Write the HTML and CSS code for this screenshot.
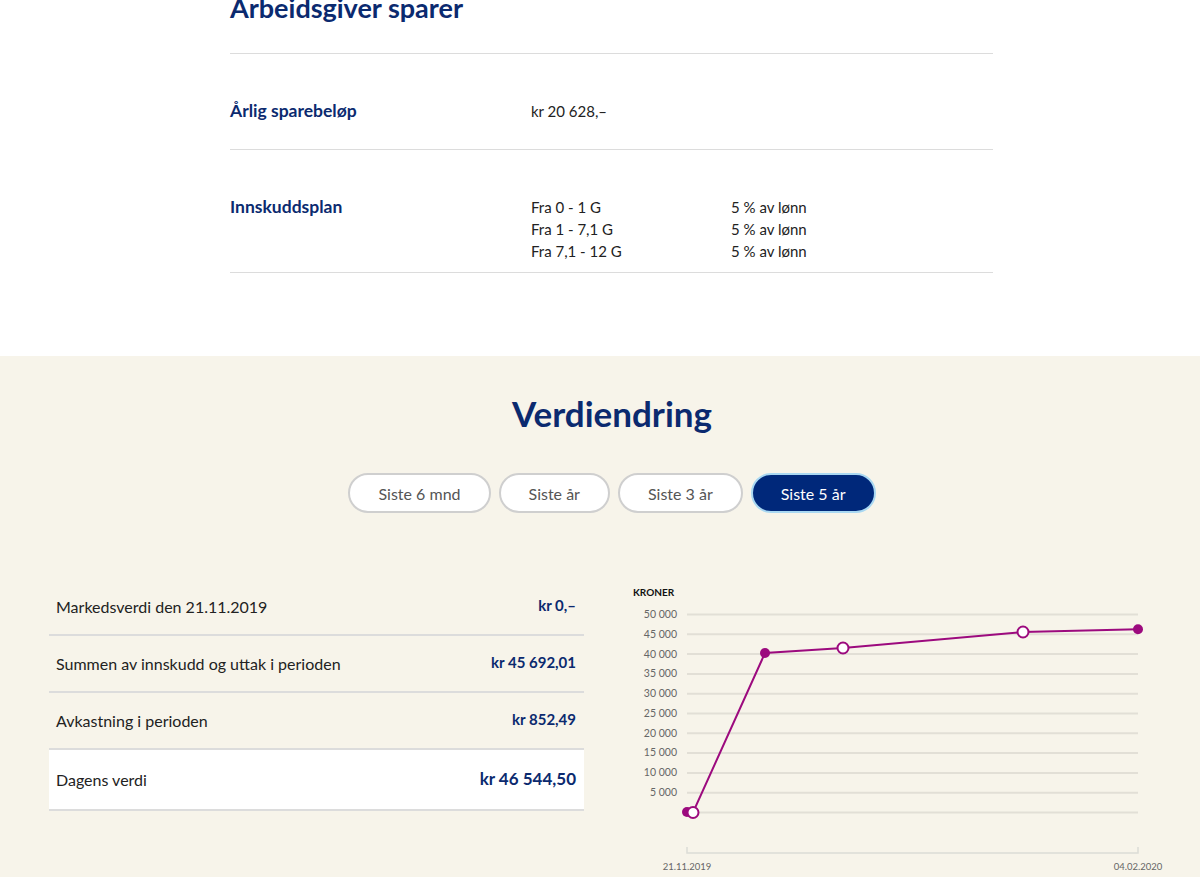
FILE: index.html
```html
<!DOCTYPE html>
<html lang="no">
<head>
    <meta charset="UTF-8">
    <meta name="viewport" content="width=device-width, initial-scale=1.0">
    <title>Arbeidsgiver sparer</title>
    <link rel="stylesheet" href="styles.css">
</head>
<body>

    <section class="savings">
        <h2>Arbeidsgiver sparer</h2>
        <div class="info-row first">
            <div class="info-label">Årlig sparebeløp</div>
            <div class="info-value">kr 20 628,–</div>
        </div>
        <div class="info-row second">
            <div class="info-label">Innskuddsplan</div>
            <div class="info-value">
                <div>Fra 0 - 1 G</div>
                <div>Fra 1 - 7,1 G</div>
                <div>Fra 7,1 - 12 G</div>
            </div>
            <div class="info-value">
                <div>5 % av lønn</div>
                <div>5 % av lønn</div>
                <div>5 % av lønn</div>
            </div>
        </div>
    </section>

    <section class="change">
        <h1>Verdiendring</h1>
        <div class="periods">
            <button class="period">Siste 6 mnd</button>
            <button class="period">Siste år</button>
            <button class="period">Siste 3 år</button>
            <button class="period active">Siste 5 år</button>
        </div>

        <div class="change-body">
            <div class="summary">
                <div class="summary-row">
                    <span>Markedsverdi den 21.11.2019</span>
                    <strong>kr 0,–</strong>
                </div>
                <div class="summary-row">
                    <span>Summen av innskudd og uttak i perioden</span>
                    <strong>kr 45 692,01</strong>
                </div>
                <div class="summary-row">
                    <span>Avkastning i perioden</span>
                    <strong>kr 852,49</strong>
                </div>
                <div class="summary-row total">
                    <span>Dagens verdi</span>
                    <strong>kr 46 544,50</strong>
                </div>
            </div>

            <svg class="chart" width="560" height="300" viewBox="0 0 560 300">
                <text class="unit" x="13" y="19">KRONER</text>
                <g class="grid">
                    <line x1="67" y1="37.5" x2="518" y2="37.5"/>
                    <line x1="67" y1="57.3" x2="518" y2="57.3"/>
                    <line x1="67" y1="77.1" x2="518" y2="77.1"/>
                    <line x1="67" y1="96.9" x2="518" y2="96.9"/>
                    <line x1="67" y1="116.7" x2="518" y2="116.7"/>
                    <line x1="67" y1="136.5" x2="518" y2="136.5"/>
                    <line x1="67" y1="156.3" x2="518" y2="156.3"/>
                    <line x1="67" y1="176.1" x2="518" y2="176.1"/>
                    <line x1="67" y1="195.9" x2="518" y2="195.9"/>
                    <line x1="67" y1="215.7" x2="518" y2="215.7"/>
                    <line x1="67" y1="235.5" x2="518" y2="235.5"/>
                </g>
                <g class="ylabels">
                    <text x="57" y="41">50 000</text>
                    <text x="57" y="61">45 000</text>
                    <text x="57" y="81">40 000</text>
                    <text x="57" y="100">35 000</text>
                    <text x="57" y="120">30 000</text>
                    <text x="57" y="140">25 000</text>
                    <text x="57" y="160">20 000</text>
                    <text x="57" y="179">15 000</text>
                    <text x="57" y="199">10 000</text>
                    <text x="57" y="219">5 000</text>
                </g>
                <path class="axis" d="M67 270 V276 H518 V270"/>
                <text class="xlabel" x="67" y="293">21.11.2019</text>
                <text class="xlabel" x="518" y="293">04.02.2020</text>

                <polyline class="series" points="67,235 73,235.5 145,76 223,71 403,55 518,52.3"/>
                <circle class="dot" cx="67" cy="235" r="5"/>
                <circle class="dot open" cx="73" cy="235.5" r="5.5"/>
                <circle class="dot" cx="145" cy="76" r="5"/>
                <circle class="dot open" cx="223" cy="71" r="5.5"/>
                <circle class="dot open" cx="403" cy="55" r="5.5"/>
                <circle class="dot" cx="518" cy="52.3" r="5"/>
            </svg>
        </div>
    </section>

</body>
</html>
```

FILE: styles.css
```css
body {
    margin: 0;
    font-family: Lato, "Open Sans", sans-serif;
    color: #222;
    background-color: #f7f4ea;
}
.savings {
    background-color: #ffffff;
    padding: 0 207px 83px 230px;
}
.savings h2 {
    margin: -8px 0 0;
    font-size: 27px;
    line-height: 32px;
    font-weight: 700;
    color: #0b2a6f;
    padding-bottom: 29px;
    border-bottom: 1px solid #dcdcdc;
}
.info-row {
    display: grid;
    grid-template-columns: 301px 200px 1fr;
    border-bottom: 1px solid #dcdcdc;
    font-size: 15px;
    line-height: 22px;
}
.info-row.first {
    padding: 46px 0 27px;
}
.info-row.second {
    padding: 46px 0 10px;
}
.info-label {
    font-size: 17.5px;
    font-weight: 700;
    color: #0b2a6f;
}
.info-value {
    color: #222;
}

.change {
    padding: 37px 0 40px 24px;
    text-align: center;
}
.change h1 {
    margin: 0;
    font-size: 35px;
    line-height: 40px;
    font-weight: 700;
    color: #0b2a6f;
}
.periods {
    display: flex;
    justify-content: center;
    gap: 8px;
    margin-top: 40px;
}
.period {
    height: 40px;
    padding: 0 28px;
    font-family: Lato, "Open Sans", sans-serif;
    font-size: 16px;
    color: #555;
    background-color: #ffffff;
    border: 2px solid #cfcfcf;
    border-radius: 20px;
    cursor: pointer;
}
.period.active {
    color: #ffffff;
    background-color: #00287a;
    border-color: #a9d8f2;
}

.change-body {
    display: flex;
    align-items: flex-start;
    gap: 36px;
    margin-top: 66px;
    padding-left: 25px;
    text-align: left;
}
.summary {
    width: 535px;
}
.summary-row {
    display: flex;
    justify-content: space-between;
    align-items: center;
    height: 55px;
    padding: 0 8px 0 7px;
    border-bottom: 2px solid #dcdcdc;
    font-size: 16px;
}
.summary-row strong {
    color: #0b2a6f;
    font-size: 15px;
    font-weight: 700;
    margin-top: -3px;
}
.summary-row.total {
    height: 59px;
    background-color: #ffffff;
}
.summary-row.total strong {
    font-size: 17px;
}

.chart {
    display: block;
    margin-top: -2px;
    font-family: Lato, "Open Sans", sans-serif;
}
.chart .unit {
    font-size: 10px;
    font-weight: 700;
    fill: #111;
}
.chart .grid line {
    stroke: #e2dfd6;
    stroke-width: 2;
}
.chart .ylabels text {
    font-size: 10.5px;
    fill: #666;
    text-anchor: end;
}
.chart .axis {
    fill: none;
    stroke: #dcdcd6;
    stroke-width: 1.5;
}
.chart .xlabel {
    font-size: 9.5px;
    fill: #666;
    text-anchor: middle;
}
.chart .series {
    fill: none;
    stroke: #9c0a7e;
    stroke-width: 2;
}
.chart .dot {
    fill: #9c0a7e;
}
.chart .dot.open {
    fill: #ffffff;
    stroke: #9c0a7e;
    stroke-width: 2;
}
```
